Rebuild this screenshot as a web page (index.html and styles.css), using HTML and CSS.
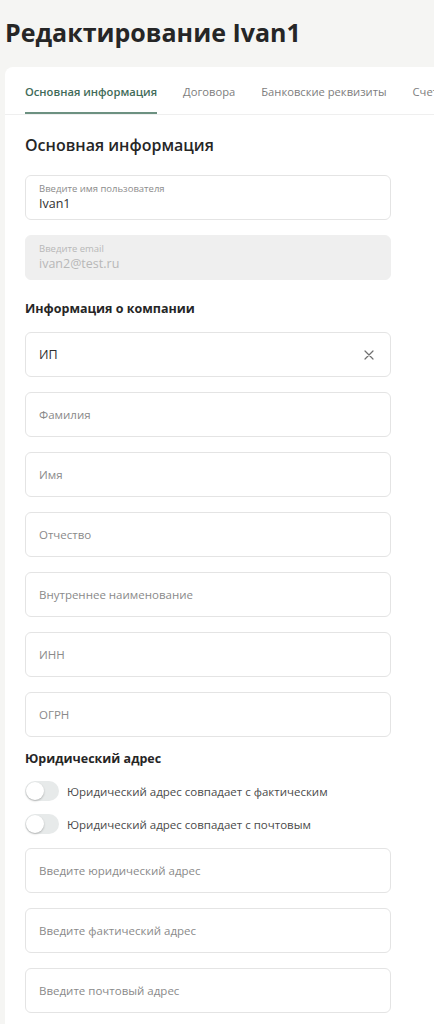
FILE: index.html
```html
<!DOCTYPE html>
<html lang="ru">
<head>
<meta charset="utf-8">
<title>Редактирование Ivan1</title>
<link rel="stylesheet" href="styles.css">
</head>
<body>
<div class="page">
  <h1 class="title">Редактирование Ivan1</h1>
  <div class="card">
    <nav class="tabs">
      <span class="tab active">Основная информация</span>
      <span class="tab">Договора</span>
      <span class="tab">Банковские реквизиты</span>
      <span class="tab">Счета</span>
    </nav>
    <div class="content">
      <h2 class="section-title">Основная информация</h2>
      <div class="fields">
        <div class="field filled">
          <span class="field-label">Введите имя пользователя</span>
          <span class="field-value">Ivan1</span>
        </div>
        <div class="field filled disabled">
          <span class="field-label">Введите email</span>
          <span class="field-value">ivan2@test.ru</span>
        </div>
      </div>

      <h3 class="group-title">Информация о компании</h3>
      <div class="fields">
        <div class="field select">
          <span class="field-value">ИП</span>
          <svg class="clear" width="10" height="10" viewBox="0 0 10 10"><path d="M1 1L9 9M9 1L1 9" stroke="#6f6f6f" stroke-width="1.2" fill="none" stroke-linecap="round"/></svg>
        </div>
        <div class="field"><span class="placeholder">Фамилия</span></div>
        <div class="field"><span class="placeholder">Имя</span></div>
        <div class="field"><span class="placeholder">Отчество</span></div>
        <div class="field"><span class="placeholder">Внутреннее наименование</span></div>
        <div class="field"><span class="placeholder">ИНН</span></div>
        <div class="field"><span class="placeholder">ОГРН</span></div>
      </div>

      <h3 class="group-title address-title">Юридический адрес</h3>
      <div class="toggles">
        <label class="toggle-row"><span class="toggle"><span class="knob"></span></span><span class="toggle-text">Юридический адрес совпадает с фактическим</span></label>
        <label class="toggle-row"><span class="toggle"><span class="knob"></span></span><span class="toggle-text">Юридический адрес совпадает с почтовым</span></label>
      </div>
      <div class="fields address-fields">
        <div class="field"><span class="placeholder">Введите юридический адрес</span></div>
        <div class="field"><span class="placeholder">Введите фактический адрес</span></div>
        <div class="field"><span class="placeholder">Введите почтовый адрес</span></div>
      </div>
    </div>
  </div>
</div>
</body>
</html>
```

FILE: styles.css
```css
* { box-sizing: border-box; }
html, body {
  margin: 0;
  padding: 0;
  background: #f5f5f3;
  overflow-x: hidden;
}
body {
  font-family: "Open Sans", "Noto Sans", sans-serif;
  color: #2b2b2b;
}
.page {
  padding-left: 5px;
}
.title {
  margin: 0;
  padding-top: 16px;
  font-family: "Open Sans", sans-serif;
  font-weight: 700;
  font-size: 25px;
  line-height: 32px;
  color: #262626;
  white-space: nowrap;
}
.card {
  margin-top: 19px;
  background: #fff;
  border-radius: 8px 0 0 0;
  width: 429px;
  min-height: 960px;
  overflow: hidden;
}
.tabs {
  display: flex;
  gap: 26px;
  padding-left: 20px;
  height: 48px;
  border-bottom: 1px solid #efefef;
  white-space: nowrap;
  overflow: hidden;
}
.tab {
  display: flex;
  align-items: center;
  padding-top: 4px;
  font-size: 11.2px;
  color: #7d7d7d;
  border-bottom: 3px solid transparent;
  height: 48px;
  flex-shrink: 0;
}
.tab.active {
  color: #3f6b59;
  font-weight: 600;
  border-bottom-color: #6c9181;
}
.content {
  padding-left: 20px;
  width: 386px;
}
.section-title {
  margin: 19px 0 19px;
  font-size: 16px;
  line-height: 22px;
  font-weight: 600;
  color: #262626;
}
.group-title {
  margin: 19px 0 13px;
  font-size: 12.5px;
  line-height: 20px;
  font-weight: 700;
  color: #262626;
}
.address-title {
  margin: 12px 0 12px;
}
.fields {
  display: flex;
  flex-direction: column;
  gap: 15px;
}
.field {
  height: 45px;
  border: 1px solid #e4e4e4;
  border-radius: 6px;
  padding: 0 13px;
  display: flex;
  align-items: center;
  background: #fff;
}
.field.filled {
  flex-direction: column;
  align-items: flex-start;
  justify-content: center;
}
.field-label {
  font-size: 9.5px;
  line-height: 13px;
  color: #8c8c8c;
}
.field-value {
  font-size: 12.5px;
  line-height: 18px;
  color: #2f2f2f;
}
.field.disabled {
  background: #efefef;
  border-color: #efefef;
}
.field.disabled .field-label,
.field.disabled .field-value {
  color: #b8b8b8;
}
.field.select {
  justify-content: space-between;
  padding-right: 16px;
}
.placeholder {
  font-size: 11.5px;
  color: #8a8a8a;
}
.clear {
  display: block;
}
.toggles {
  display: flex;
  flex-direction: column;
  gap: 13px;
}
.toggle-row {
  display: flex;
  align-items: center;
  gap: 8px;
  height: 20px;
}
.toggle {
  width: 34px;
  height: 20px;
  border-radius: 10px;
  background: #e7eaea;
  padding: 1px;
  display: flex;
  align-items: center;
}
.knob {
  width: 18px;
  height: 18px;
  border-radius: 50%;
  background: #fff;
  box-shadow: 0 1px 2px rgba(0,0,0,0.25);
}
.toggle-text {
  font-size: 11.5px;
  color: #4a4a4a;
}
.address-fields {
  margin-top: 14px;
}
```
